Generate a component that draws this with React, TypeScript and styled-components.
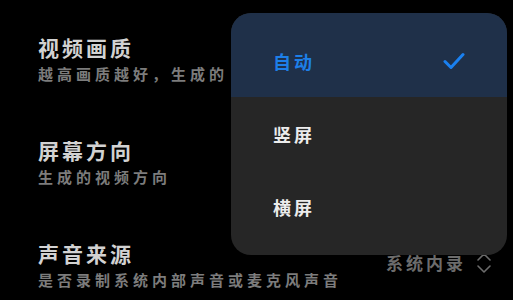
import React from 'react';
import styled, { createGlobalStyle } from 'styled-components';

const GlobalStyle = createGlobalStyle`
  html, body {
    margin: 0;
    padding: 0;
    background: #000;
  }
  body {
    font-family: "Noto Sans CJK SC", "Noto Sans", sans-serif;
  }
`;

const Screen = styled.div`
  position: relative;
  width: 513px;
  height: 300px;
  overflow: hidden;
  background: #000;
  padding: 33px 21px 0 38px;
  box-sizing: border-box;
  display: flex;
  flex-direction: column;
`;

const SettingRow = styled.div`
  height: 103px;
  flex-shrink: 0;
  display: flex;
  align-items: flex-start;
  justify-content: space-between;
`;

const TextBlock = styled.div`
  display: flex;
  flex-direction: column;
`;

const Title = styled.div`
  font-size: 21px;
  line-height: 28px;
  font-weight: 700;
  letter-spacing: 3px;
  color: #d2d2d2;
  white-space: nowrap;
`;

const Subtitle = styled.div`
  margin-top: 3px;
  font-size: 15px;
  line-height: 20px;
  font-weight: 700;
  letter-spacing: 4px;
  color: #7c7c7c;
  white-space: nowrap;
`;

const ValueBox = styled.div`
  display: flex;
  align-items: center;
  gap: 10px;
  margin-top: 12px;
  color: #6c6c6c;
  font-size: 17px;
  line-height: 24px;
  font-weight: 700;
  letter-spacing: 3px;
`;

const Menu = styled.div`
  position: absolute;
  left: 231px;
  top: 13px;
  width: 276px;
  height: 242px;
  border-radius: 20px;
  background: #262626;
  overflow: hidden;
  display: flex;
  flex-direction: column;
  box-sizing: border-box;
  padding-bottom: 12px;
`;

const MenuItem = styled.div<{ $active?: boolean; $first?: boolean }>`
  height: ${(p) => (p.$first ? 84 : 73)}px;
  flex-shrink: 0;
  padding: ${(p) => (p.$first ? '11px' : '0')} 42px 0 42px;
  box-sizing: border-box;
  display: flex;
  align-items: center;
  justify-content: space-between;
  background: ${(p) => (p.$active ? '#1f3049' : 'transparent')};
  color: ${(p) => (p.$active ? '#1d7fe8' : '#ececec')};
  font-size: 18px;
  font-weight: 700;
  letter-spacing: 3px;
`;

const Check = () => (
  <svg width="22" height="18" viewBox="0 0 22 18" fill="none">
    <path d="M2 9.5 L8 15.5 L20 2.5" stroke="#1a80f0" strokeWidth="3" strokeLinecap="round" strokeLinejoin="round" />
  </svg>
);

const UpDown = () => (
  <svg width="16" height="22" viewBox="0 0 16 22" fill="none">
    <path d="M2 8 L8 2 L14 8" stroke="#6c6c6c" strokeWidth="1.6" strokeLinecap="round" strokeLinejoin="round" />
    <path d="M2 14 L8 20 L14 14" stroke="#6c6c6c" strokeWidth="1.6" strokeLinecap="round" strokeLinejoin="round" />
  </svg>
);

const options = ['自动', '竖屏', '横屏'];

export default function App() {
  return (
    <>
      <GlobalStyle />
      <Screen>
        <SettingRow>
          <TextBlock>
            <Title>视频画质</Title>
            <Subtitle>越高画质越好，生成的</Subtitle>
          </TextBlock>
        </SettingRow>
        <SettingRow>
          <TextBlock>
            <Title>屏幕方向</Title>
            <Subtitle>生成的视频方向</Subtitle>
          </TextBlock>
        </SettingRow>
        <SettingRow>
          <TextBlock>
            <Title>声音来源</Title>
            <Subtitle>是否录制系统内部声音或麦克风声音</Subtitle>
          </TextBlock>
          <ValueBox>
            系统内录
            <UpDown />
          </ValueBox>
        </SettingRow>
        <Menu>
          {options.map((o, i) => (
            <MenuItem key={o} $active={i === 0} $first={i === 0}>
              {o}
              {i === 0 && <Check />}
            </MenuItem>
          ))}
        </Menu>
      </Screen>
    </>
  );
}
